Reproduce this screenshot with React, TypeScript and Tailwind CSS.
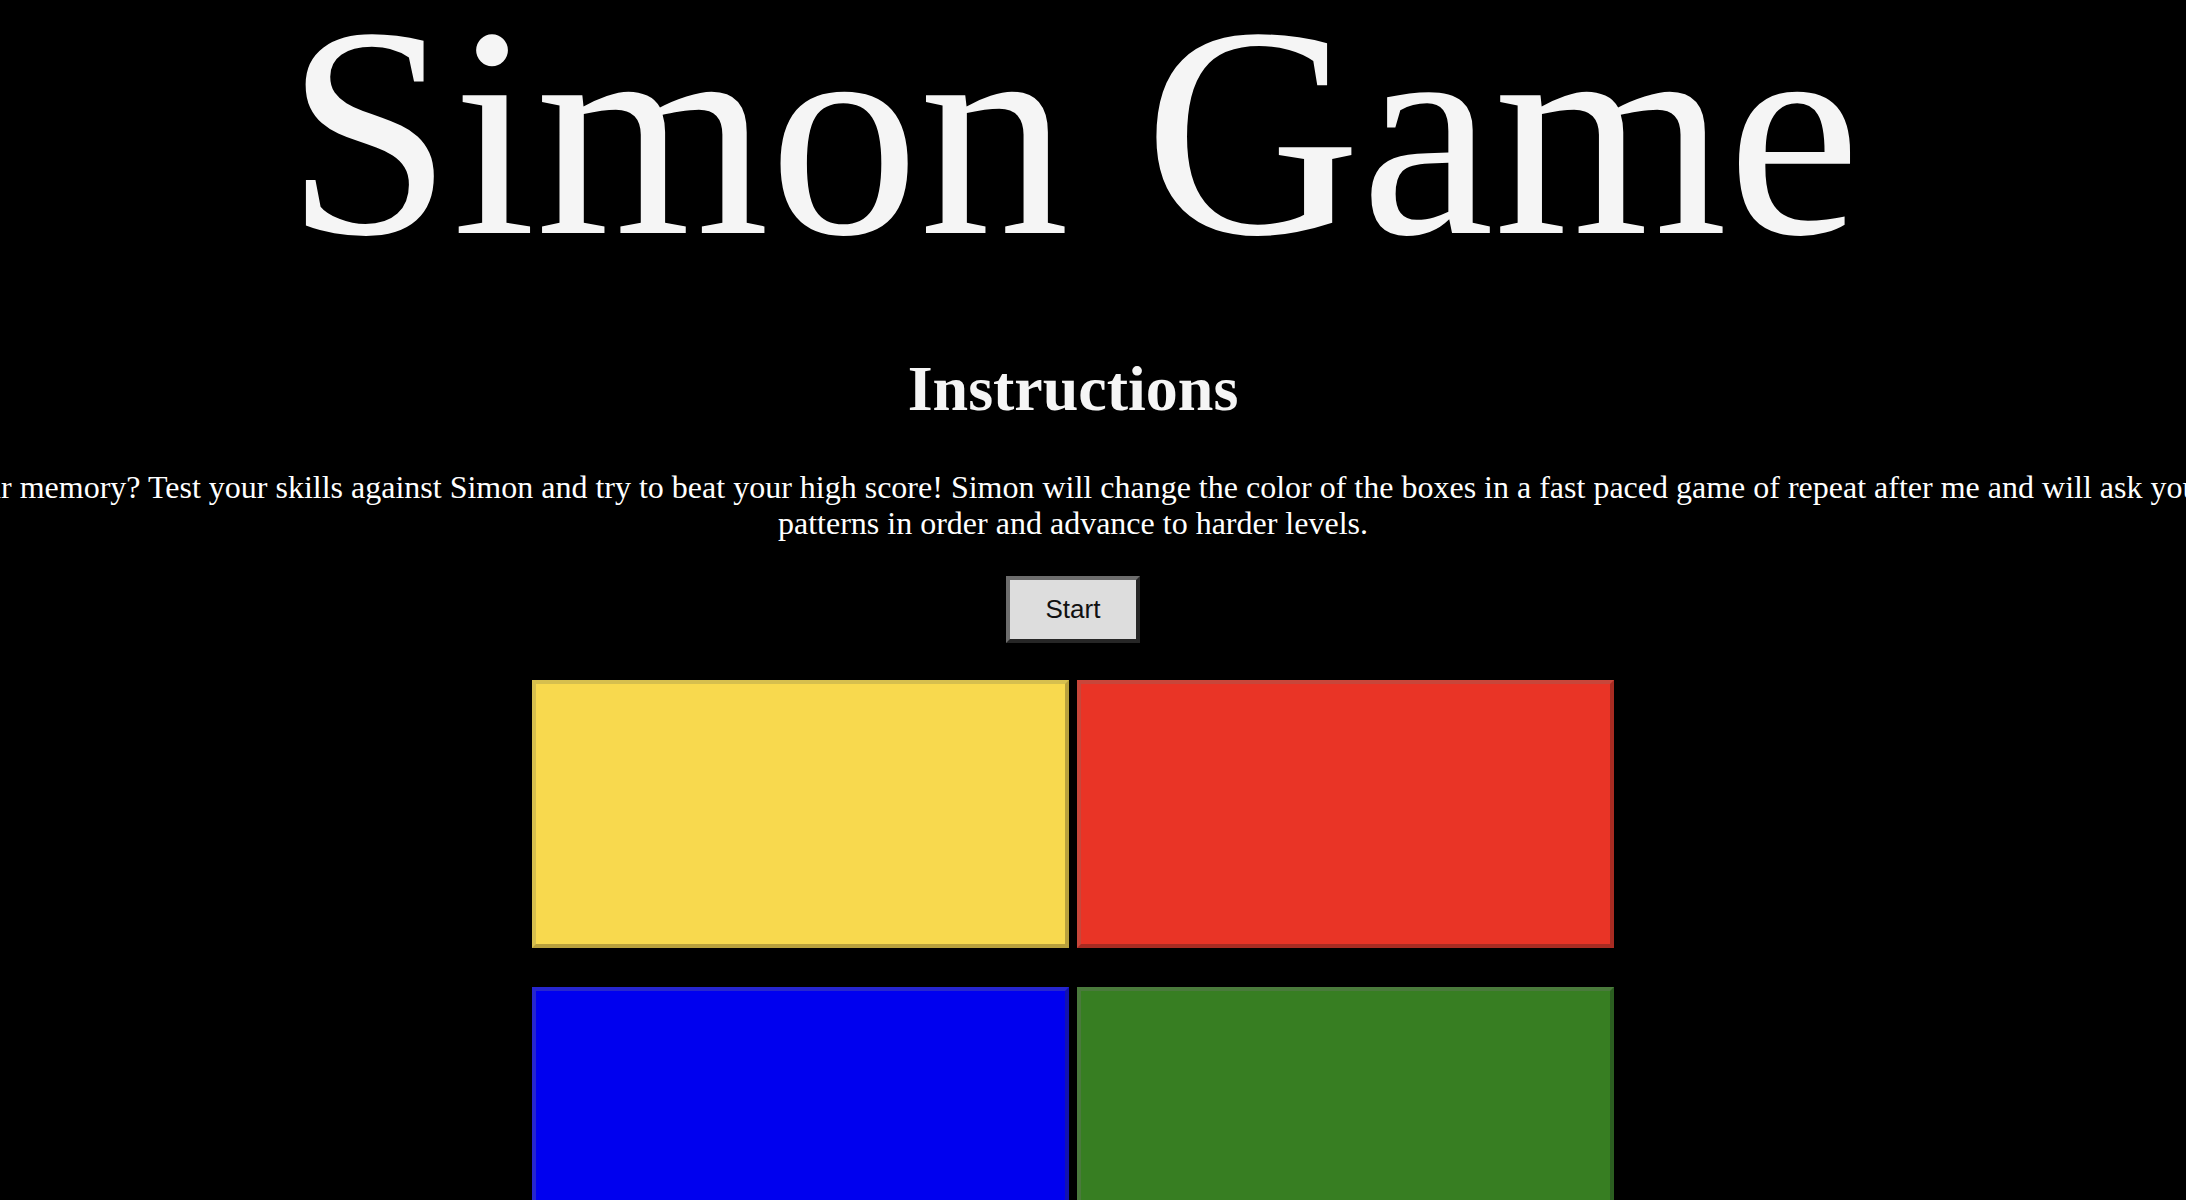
import React from "react";

export default function App() {
  return (
    <div className="w-full h-[1200px] bg-black overflow-hidden" style={{}}>
      <div className="w-[2146px] flex flex-col items-center font-['Liberation_Serif','Times_New_Roman',serif]">
        <h1 className="mt-[-18px] text-[300px] leading-[1] text-[#f5f5f5] font-normal whitespace-nowrap">
          Simon Game
        </h1>
        <h2 className="mt-[70px] text-[64px] leading-[73.6px] font-bold text-[#f5f5f5] whitespace-nowrap">
          Instructions
        </h2>
        <p className="mt-[43px] text-[32px] leading-[36px] text-white text-center whitespace-nowrap">
          How good is your memory? Test your skills against Simon and try to beat your high score! Simon will change the color of the boxes in a fast paced game of repeat after me and will ask you to repeat the
          <br />
          patterns in order and advance to harder levels.
        </p>
        <button className="mt-[35px] w-[134px] h-[67px] bg-[#dddddd] border-4 border-t-[#6d6d6d] border-l-[#6d6d6d] border-b-[#262626] border-r-[#262626] text-[26px] text-[#111111] font-['Liberation_Sans','Arial',sans-serif] flex items-center justify-center">
          Start
        </button>
        <div className="mt-[37px] grid grid-cols-[537px_537px] gap-x-[8px] gap-y-[39px]">
          <div className="h-[268px] bg-[#f8d94e] border-4 border-t-[#d6bf4e] border-l-[#d6bf4e] border-b-[#b8a03c] border-r-[#b8a03c]" />
          <div className="h-[268px] bg-[#e93426] border-4 border-t-[#c8463a] border-l-[#c8463a] border-b-[#a82b22] border-r-[#a82b22]" />
          <div className="h-[268px] bg-[#0000ef] border-4 border-t-[#2626cf] border-l-[#2626cf] border-b-[#1212b0] border-r-[#1212b0]" />
          <div className="h-[268px] bg-[#377e22] border-4 border-t-[#4a7a3c] border-l-[#4a7a3c] border-b-[#2b5e20] border-r-[#2b5e20]" />
        </div>
      </div>
    </div>
  );
}
